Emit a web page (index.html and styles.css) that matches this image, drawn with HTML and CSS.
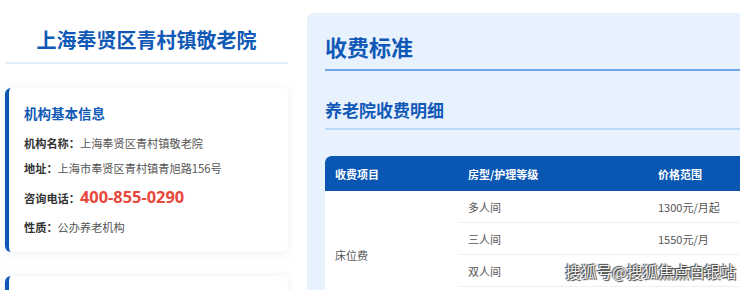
FILE: index.html
```html
<!DOCTYPE html>
<html lang="zh-CN">
<head>
    <meta charset="UTF-8">
    <title>上海奉贤区青村镇敬老院</title>
    <link rel="stylesheet" href="styles.css">
</head>
<body>
<div class="page">
    <div class="sidebar">
        <h1 class="site-name">上海奉贤区青村镇敬老院</h1>

        <div class="card">
            <h3 class="card-title">机构基本信息</h3>
            <p class="info"><b>机构名称：</b>上海奉贤区青村镇敬老院</p>
            <p class="info"><b>地址：</b>上海市奉贤区青村镇青旭路156号</p>
            <p class="info phone-row"><b>咨询电话：</b><span class="phone">400-855-0290</span></p>
            <p class="info"><b>性质：</b>公办养老机构</p>
        </div>

        <div class="card"></div>
    </div>

    <div class="main">
        <h2 class="main-title">收费标准</h2>
        <h3 class="sub-title">养老院收费明细</h3>

        <table class="fee-table">
            <thead>
            <tr>
                <th class="col-item">收费项目</th>
                <th class="col-type">房型/护理等级</th>
                <th>价格范围</th>
            </tr>
            </thead>
            <tbody>
            <tr>
                <td rowspan="4" class="item">床位费</td>
                <td>多人间</td>
                <td>1300元/月起</td>
            </tr>
            <tr>
                <td>三人间</td>
                <td>1550元/月</td>
            </tr>
            <tr>
                <td>双人间</td>
                <td>1800元/月</td>
            </tr>
            <tr>
                <td>单人间</td>
                <td>2500元/月</td>
            </tr>
            </tbody>
        </table>
    </div>
</div>

<div class="watermark">搜狐号@搜狐焦点白银站</div>
</body>
</html>
```

FILE: styles.css
```css
* {
    margin: 0;
    padding: 0;
    box-sizing: border-box;
}
html, body {
    width: 740px;
    height: 290px;
    overflow: hidden;
}
body {
    background: #fff;
    font-family: "Noto Sans CJK SC", "Noto Sans", sans-serif;
    color: #555;
    position: relative;
}
.page {
    display: flex;
    align-items: flex-start;
    width: 1100px;
    padding-left: 5px;
    gap: 19px;
}

/* 左侧 */
.sidebar {
    width: 283px;
    flex: none;
}
.site-name {
    text-align: center;
    font-size: 20px;
    line-height: 28px;
    font-weight: 700;
    color: #1059b6;
    padding: 26px 0 8px;
    border-bottom: 2px solid #e3eefb;
}
.card {
    margin-top: 24px;
    background: #fff;
    border-left: 4px solid #0a58b4;
    border-radius: 6px;
    box-shadow: 0 1px 8px rgba(30, 80, 150, .10);
    padding: 15px 15px 15px;
    min-height: 164px;
}
.card-title {
    font-size: 13.5px;
    line-height: 20px;
    font-weight: 700;
    color: #1059b6;
    margin-bottom: 12px;
}
.info {
    font-size: 11.2px;
    line-height: 17px;
    color: #555;
    margin-bottom: 8px;
}
.info b {
    color: #333;
    font-weight: 700;
}
.phone-row {
    line-height: 23px;
    margin-top: 7px;
    margin-bottom: 9px;
}
.phone {
    font-size: 16.4px;
    font-weight: 700;
    color: #e8473b;
    font-family: "Noto Sans", "Noto Sans CJK SC", sans-serif;
}
.info:last-child {
    margin-bottom: 0;
}

/* 右侧 */
.main {
    margin-top: 13px;
    width: 760px;
    background: #e7f2fe;
    border-radius: 6px;
    padding: 19px 0 0 18px;
    min-height: 300px;
}
.main-title {
    font-size: 22px;
    line-height: 28px;
    font-weight: 700;
    color: #1059b6;
    padding-bottom: 9px;
    border-bottom: 2px solid #6fa7e6;
}
.sub-title {
    margin-top: 27px;
    font-size: 17px;
    line-height: 24px;
    font-weight: 700;
    color: #1059b6;
    padding-bottom: 6px;
    border-bottom: 2px solid #bcdaf7;
}
.fee-table {
    margin-top: 26px;
    width: 100%;
    border-collapse: separate;
    border-spacing: 0;
    background: #fff;
    border-radius: 6px 6px 0 0;
    overflow: hidden;
    font-size: 11px;
}
.fee-table th {
    background: #0a57b3;
    color: #fff;
    font-weight: 700;
    text-align: left;
    height: 35px;
    padding: 0 10px;
}
.fee-table th:first-child {
    border-top-left-radius: 6px;
}
.col-item {
    width: 133px;
}
.col-type {
    width: 190px;
}
.fee-table td {
    height: 32px;
    padding: 0 10px;
    color: #555;
    border-bottom: 1px solid #e8f0fa;
}
.fee-table td.item {
    border-bottom: none;
}

.watermark {
    position: absolute;
    right: 4px;
    top: 261px;
    font-size: 15.6px;
    line-height: 20px;
    color: #f4f4f4;
    text-shadow: 0 0 1px #333, 1px 1px 1px #444, -1px -1px 1px #444;
}
```
